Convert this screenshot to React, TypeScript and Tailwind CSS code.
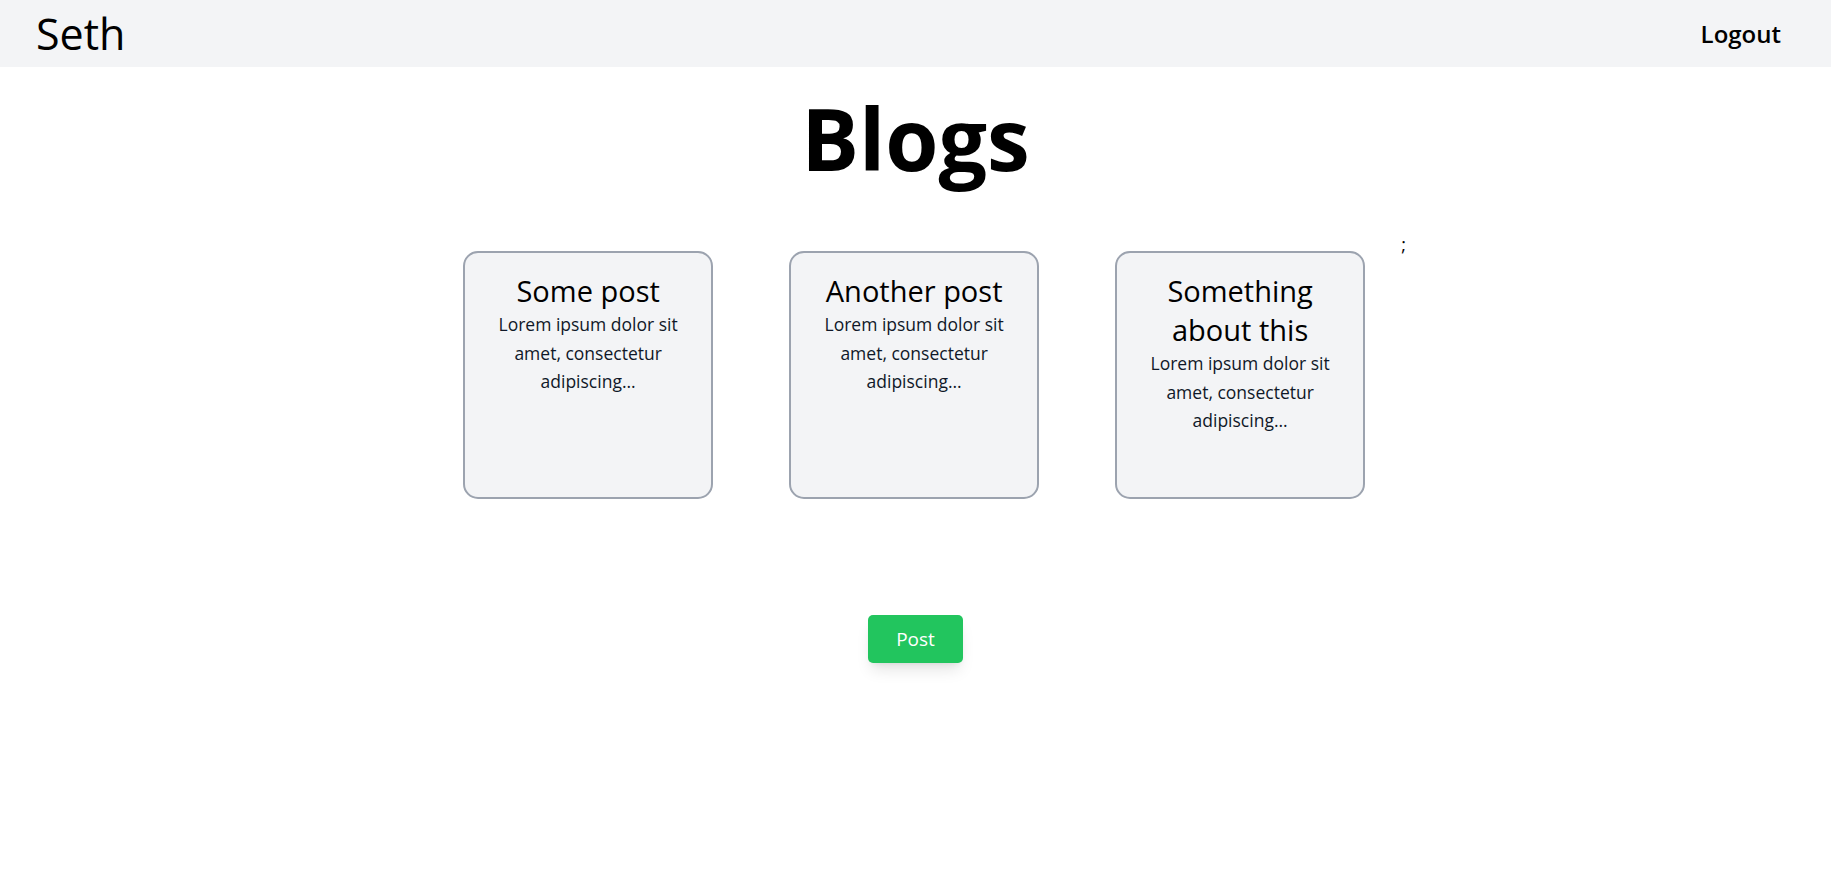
const posts = [
  { title: "Some post", body: "Lorem ipsum dolor sit amet, consectetur adipiscing..." },
  { title: "Another post", body: "Lorem ipsum dolor sit amet, consectetur adipiscing..." },
  { title: "Something about this", body: "Lorem ipsum dolor sit amet, consectetur adipiscing..." },
];

function PostCard({ title, body }: { title: string; body: string }) {
  return (
    <div className="mx-[38px] flex h-[248px] w-[250px] flex-col items-center rounded-[15px] border-2 border-[#9ca3af] bg-[#f3f4f6] px-[20px] pt-[18px] text-center">
      <h2 className="text-[29px] leading-[39px] text-black">{title}</h2>
      <p className="text-[17.5px] leading-[28.5px] text-gray-900">{body}</p>
    </div>
  );
}

export default function App() {
  return (
    <div className="min-h-screen bg-white font-['Segoe_UI','Open_Sans',sans-serif] text-black">
      <nav className="flex h-[67px] items-center justify-between bg-[#f3f4f6] pl-[36px] pr-[50px]">
        <span className="text-[43px] font-medium leading-none">Seth</span>
        <button className="text-[24px] font-semibold">Logout</button>
      </nav>

      <main className="flex flex-col items-center">
        <h1 className="mt-[26px] text-[86px] font-bold leading-[90px]">Blogs</h1>

        <section className="mt-[68px] flex items-start justify-center">
          {posts.map((p) => (
            <PostCard key={p.title} title={p.title} body={p.body} />
          ))}
          <span className="-ml-[2px] -mt-[22px] text-[18px] leading-[30px]">;</span>
        </section>

        <button className="mt-[116px] h-[48px] w-[95px] rounded-[5px] bg-[#22c55e] text-[19px] text-white shadow-lg">
          Post
        </button>
      </main>
    </div>
  );
}
